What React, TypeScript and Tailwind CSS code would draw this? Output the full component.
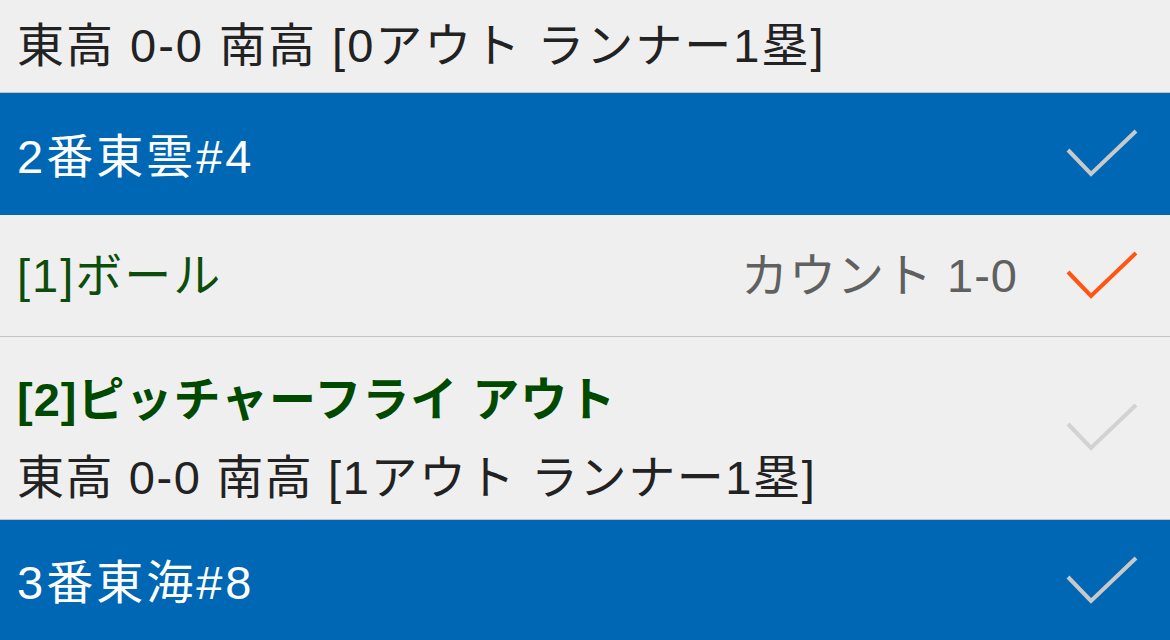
import React from "react";

function Check({ color }: { color: string }) {
  return (
    <svg width="72" height="50" viewBox="0 0 72 50" className="shrink-0">
      <polyline points="2,21 25,45 70,2" fill="none" stroke={color} strokeWidth="4" />
    </svg>
  );
}

export default function App() {
  const font = { fontFamily: '"Liberation Sans", "Noto Sans CJK JP", sans-serif' };
  return (
    <div className="w-[1170px] h-[640px] overflow-hidden bg-[#efefef] text-[47px] tracking-[2px]" style={font}>
      <div className="h-[93px] flex items-center pl-[17px] text-[#222222] border-b border-[#c4c4c4]">
        <span>東高 0-0 南高 [0アウト ランナー1塁]</span>
      </div>
      <div className="h-[122px] flex items-center justify-between pl-[17px] pr-[32px] bg-[#0067b4] text-white">
        <span className="pt-[6px] tracking-[3px]">2番東雲#4</span>
        <Check color="#c9c9c9" />
      </div>
      <div className="h-[122px] flex items-center pl-[17px] pr-[32px] border-b border-[#c4c4c4]">
        <span className="text-[#0b4d0b] flex-1 pt-[2px]">[1]ボール</span>
        <span className="text-[#606060] mr-[48px] pt-[2px] tracking-[1px]">カウント 1-0</span>
        <Check color="#ff5511" />
      </div>
      <div className="h-[183px] flex items-center pl-[17px] pr-[32px] border-b border-[#c4c4c4]">
        <div className="flex-1 flex flex-col self-start pt-[33px]">
          <span className="text-[#004a00] font-bold leading-[60px] tracking-[1px]">[2]ピッチャーフライ アウト</span>
          <span className="text-[#222222] leading-[96px] tracking-[1.6px]">東高 0-0 南高 [1アウト ランナー1塁]</span>
        </div>
        <Check color="#d2d2d2" />
      </div>
      <div className="h-[121px] flex items-center justify-between pl-[17px] pr-[32px] bg-[#0067b4] text-white">
        <span className="pt-[5px] tracking-[3px]">3番東海#8</span>
        <Check color="#c9c9c9" />
      </div>
    </div>
  );
}
